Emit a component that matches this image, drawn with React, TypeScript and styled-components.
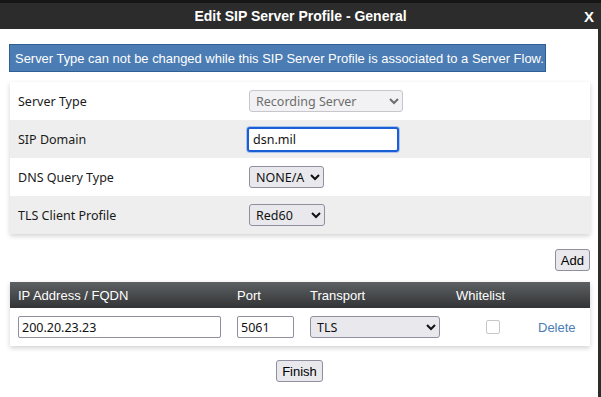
import React from 'react';
import styled, { createGlobalStyle } from 'styled-components';

const GlobalStyle = createGlobalStyle`
  html, body {
    margin: 0;
    padding: 0;
    background: #fff;
  }
  body {
    font-family: "Liberation Sans", Arial, sans-serif;
  }
`;

const Frame = styled.div`
  width: 601px;
  height: 397px;
  box-sizing: border-box;
  background: #161616;
  padding-top: 3px;
  display: flex;
  flex-direction: column;
  overflow: hidden;
`;

const TitleBar = styled.div`
  height: 26px;
  background: #2c2c2c;
  color: #fff;
  display: flex;
  align-items: center;
  justify-content: center;
  position: relative;
  font-size: 14px;
  font-weight: bold;
`;

const CloseX = styled.span`
  position: absolute;
  right: 7px;
  top: 5px;
  font-size: 15px;
  font-weight: bold;
`;

const Body = styled.div`
  flex: 1;
  background: #fff;
  border-right: 3px solid #2c2c2c;
  padding: 15px 8px 0 9px;
  display: flex;
  flex-direction: column;
`;

const Notice = styled.div`
  width: 537px;
  box-sizing: border-box;
  height: 28px;
  background: #4b7cb3;
  border: 1px solid #2f5f93;
  color: #fff;
  font-size: 12.95px;
  white-space: nowrap;
  display: flex;
  align-items: center;
  padding-left: 5px;
`;

const Card = styled.div`
  margin-top: 10px;
  margin-left: 1px;
  width: 580px;
  background: #fff;
  box-shadow: 0 2px 5px rgba(0, 0, 0, 0.18);
`;

const FormRow = styled.div<{ $shaded?: boolean }>`
  height: 38px;
  display: grid;
  grid-template-columns: 239px 1fr;
  align-items: center;
  background: ${p => (p.$shaded ? '#eeeeee' : '#fff')};
`;

const Label = styled.span`
  padding-left: 8px;
  font-family: "Noto Sans", sans-serif;
  font-size: 12.5px;
  color: #1a1a1a;
`;

const Select = styled.select<{ $w: number }>`
  width: ${p => p.$w}px;
  height: 22px;
  font-family: "Noto Sans", sans-serif;
  font-size: 12.5px;
  color: #111;
  background: #e9e9ed;
  border: 1px solid #8f8f9d;
  border-radius: 3px;
  padding: 0 2px;
  &:disabled {
    color: #6d6d6d;
    background: #f2f2f4;
    border-color: #c6c6cc;
    opacity: 1;
  }
`;

const FocusInput = styled.input`
  width: 152px;
  height: 25px;
  box-sizing: border-box;
  margin-left: -2px;
  font-family: "Noto Sans", sans-serif;
  font-size: 12.5px;
  color: #111;
  border: 2px solid #1a5fd6;
  border-radius: 3px;
  box-shadow: 0 0 0 1px #a9c3ef;
  padding: 0 4px;
  outline: none;
`;

const AddBar = styled.div`
  display: flex;
  justify-content: flex-end;
  width: 581px;
  margin-top: 15px;
`;

const Button = styled.button`
  height: 22px;
  padding: 0 5px;
  font-family: "Liberation Sans", Arial, sans-serif;
  font-size: 13px;
  color: #000;
  background: #e9e9ed;
  border: 1px solid #8f8f9d;
  border-radius: 3px;
`;

const TableCard = styled.div`
  margin-top: 11px;
  margin-left: 1px;
  width: 580px;
  background: #fff;
  box-shadow: 0 2px 5px rgba(0, 0, 0, 0.18);
`;

const Cols = `
  display: grid;
  grid-template-columns: 219px 73px 146px 67px 1fr;
  align-items: center;
  padding-left: 8px;
`;

const HeadRow = styled.div`
  ${Cols}
  height: 26px;
  background: linear-gradient(#5e6163, #323436);
  color: #fff;
  font-size: 13px;
`;

const DataRow = styled.div`
  ${Cols}
  height: 38px;
`;

const TextBox = styled.input<{ $w: number }>`
  width: ${p => p.$w}px;
  height: 22px;
  box-sizing: border-box;
  font-family: "Noto Sans", sans-serif;
  font-size: 12.5px;
  color: #111;
  border: 1px solid #8f8f9d;
  border-radius: 2px;
  padding: 0 3px;
`;

const CheckCell = styled.div`
  display: flex;
  padding-left: 30px;
`;

const Check = styled.span`
  width: 12px;
  height: 12px;
  border: 1px solid #c7c7c7;
  border-radius: 2px;
  background: #fff;
`;

const DeleteLink = styled.span`
  color: #4b7cb3;
  font-size: 13px;
  padding-left: 15px;
`;

const Footer = styled.div`
  display: flex;
  justify-content: center;
  width: 581px;
  margin-top: 14px;
`;

export default function App() {
  return (
    <>
      <GlobalStyle />
      <Frame>
        <TitleBar>
          Edit SIP Server Profile - General
          <CloseX>X</CloseX>
        </TitleBar>
        <Body>
          <Notice>Server Type can not be changed while this SIP Server Profile is associated to a Server Flow.</Notice>
          <Card>
            <FormRow>
              <Label>Server Type</Label>
              <div>
                <Select $w={154} disabled defaultValue="rec">
                  <option value="rec">Recording Server</option>
                </Select>
              </div>
            </FormRow>
            <FormRow $shaded>
              <Label>SIP Domain</Label>
              <div>
                <FocusInput defaultValue="dsn.mil" />
              </div>
            </FormRow>
            <FormRow>
              <Label>DNS Query Type</Label>
              <div>
                <Select $w={75} defaultValue="a">
                  <option value="a">NONE/A</option>
                </Select>
              </div>
            </FormRow>
            <FormRow $shaded>
              <Label>TLS Client Profile</Label>
              <div>
                <Select $w={76} defaultValue="r">
                  <option value="r">Red60</option>
                </Select>
              </div>
            </FormRow>
          </Card>
          <AddBar>
            <Button type="button">Add</Button>
          </AddBar>
          <TableCard>
            <HeadRow>
              <span>IP Address / FQDN</span>
              <span>Port</span>
              <span>Transport</span>
              <span>Whitelist</span>
              <span />
            </HeadRow>
            <DataRow>
              <div><TextBox $w={203} defaultValue="200.20.23.23" /></div>
              <div><TextBox $w={57} defaultValue="5061" /></div>
              <div>
                <Select $w={130} defaultValue="tls">
                  <option value="tls">TLS</option>
                </Select>
              </div>
              <CheckCell><Check /></CheckCell>
              <DeleteLink>Delete</DeleteLink>
            </DataRow>
          </TableCard>
          <Footer>
            <Button type="button">Finish</Button>
          </Footer>
        </Body>
      </Frame>
    </>
  );
}
